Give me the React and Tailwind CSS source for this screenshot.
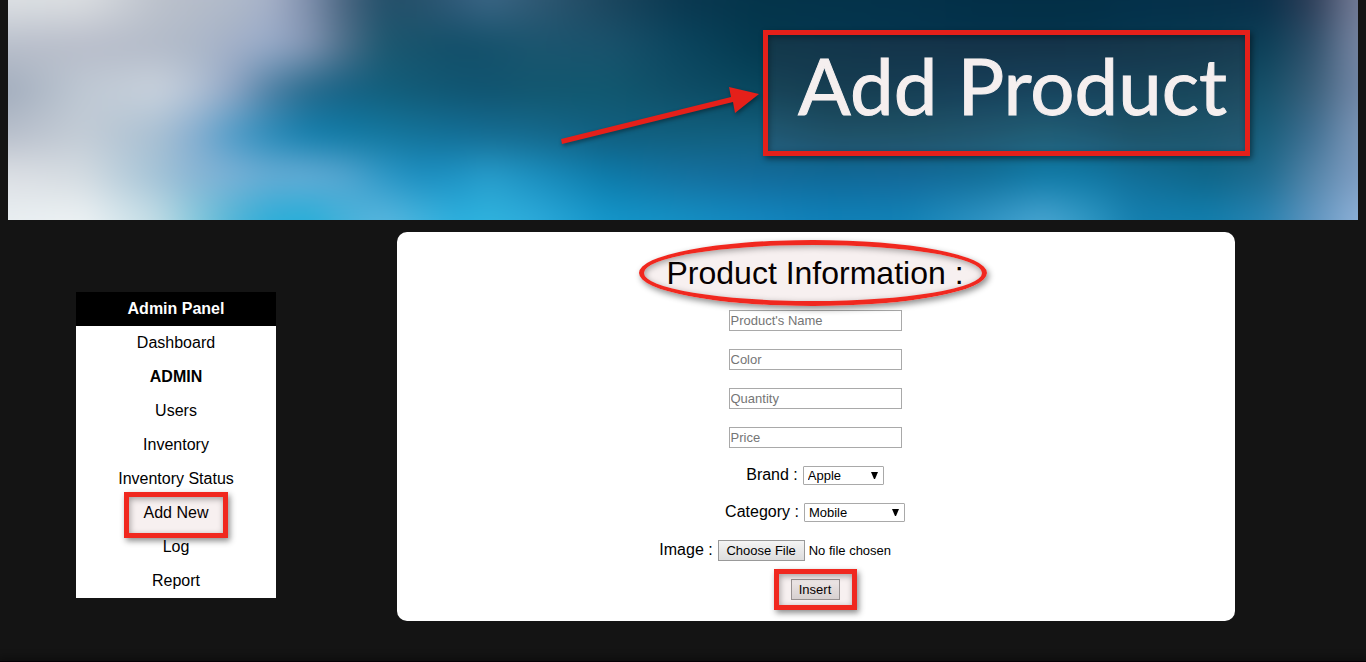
import React from "react";

const rowTops = [0, 45, 90, 135, 175, 220];
const columns = [0, 75, 150, 187, 225, 262, 300, 337, 375, 412, 450, 480, 525, 600, 675, 750, 825, 900, 975, 1035, 1080, 1125, 1200, 1260, 1305, 1350];
const rowColors = [
  "dde1e4 dbdee1 bcc2cc b6bdca b0bac9 a6b1c8 8090ad 4a6580 24506a 28526c 325c7b 3b6685 315a75 1c465e 0a3850 04344a 04334a 04324a 032f47 032f46 032f46 04304a 063049 0a304a 2f3e58 757d98",
  "b9bfcb b8bdca b3bbc9 adb8c8 a3b0c8 97aac8 8496b4 4d6f8a 1d5870 17536c 134f69 15516b 1b556f 1a526c 0b455e 04394f 043750 05354f 05344d 05344d 05354e 06374f 073a52 0d4058 30506b 7886a3",
  "a2adbd bec8d3 c9d2dd b4c2d5 8ea5c4 4f80a4 276a8c 176284 125f7c 125a76 115672 115470 12576f 11586f 0f4d66 08475e 073f56 07405a 084260 094664 094664 094660 0b4a62 165069 3a5f7a 7388a8",
  "b8bfcb c3ccd6 a8bfd2 86aed0 4f9cc8 2b8cba 147fad 117ba6 1478a0 14739a 136f97 156d93 156a8e 115f80 11607e 13607f 12566f 12586f 145d78 14657f 125f7c 105870 0f5c77 1a5f7c 417093 7d97b8",
  "dcdfe4 d3dbe1 a2c2d6 89b5d4 7ab0d5 68acd4 66acd5 55a5d0 2e98c7 1c8ec0 1f93c4 289dcc 1c90c0 0d7aa9 1571a0 136b9b 106998 14699a 116f9a 0f7aa8 0f78a5 126f99 0f6689 206c90 5484a8 7f9dc2",
  "e9eff2 edf2f4 c0dce5 87c9dc 50b5d6 2cadd8 25aed8 45b2da 5ab6de 42b4de 2bafde 30b4de 2dabdb 1496ca 1490c4 1387c0 0f80b8 1283b7 2f94c4 4aa6d2 3098c4 1580b0 117ead 2a84b2 6095c0 8fb2d8",
].map((row) => row.split(" "));

function BlurredSky() {
  return (
    <svg aria-hidden="true" viewBox="0 0 1350 220" preserveAspectRatio="none" className="absolute inset-0 h-full w-full">
      <defs>
        <filter id="soften" filterUnits="userSpaceOnUse" x="-60" y="-60" width="1470" height="340" colorInterpolationFilters="sRGB">
          <feGaussianBlur stdDeviation="13 11" />
        </filter>
        {rowColors.map((row, i) => (
          <linearGradient key={i} id={`sky-${i}`} gradientUnits="userSpaceOnUse" x1="0" x2="1350" y1="0" y2="0">
            {row.map((color, c) => (
              <stop key={c} offset={columns[c] / 1350} stopColor={`#${color}`} />
            ))}
          </linearGradient>
        ))}
        {rowTops.slice(1).map((y, i) => (
          <React.Fragment key={y}>
            <linearGradient id={`fade-${i + 1}`} gradientUnits="userSpaceOnUse" x1="0" x2="0" y1={rowTops[i]} y2={y}>
              <stop offset="0" stopColor="#fff" stopOpacity="0" />
              <stop offset="1" stopColor="#fff" />
            </linearGradient>
            <mask id={`mask-${i + 1}`} maskUnits="userSpaceOnUse" x="-60" y="-60" width="1470" height="340">
              <rect x="-60" y="-60" width="1470" height="340" fill={`url(#fade-${i + 1})`} />
            </mask>
          </React.Fragment>
        ))}
      </defs>
      <g filter="url(#soften)">
        {rowColors.map((row, i) => (
          <rect key={i} x="-60" y="-60" width="1470" height="340" fill={`url(#sky-${i})`} mask={i ? `url(#mask-${i})` : undefined} />
        ))}
      </g>
    </svg>
  );
}

function Highlight({ className }) {
  return (
    <span
      aria-hidden="true"
      className={`pointer-events-none absolute border-5 border-[#f0281f] bg-[#780000]/6 shadow-[2px_3px_6px_rgba(0,0,0,0.45),inset_1px_2px_6px_rgba(0,0,0,0.35)] ${className}`}
    />
  );
}

const links = ["Dashboard", "ADMIN", "Users", "Inventory", "Inventory Status", "Add New", "Log", "Report"];

function Sidebar() {
  return (
    <nav className="mt-[60px] w-[200px] shrink-0 bg-white text-center text-base leading-[34px]">
      <h2 className="bg-black font-bold text-white">Admin Panel</h2>
      <ul>
        {links.map((name) => (
          <li key={name}>
            <a href="#" className={name === "ADMIN" ? "font-bold" : "relative inline-block"}>
              {name}
              {name === "Add New" && <Highlight className="-inset-x-5 -top-1 -bottom-2" />}
            </a>
          </li>
        ))}
      </ul>
    </nav>
  );
}

function TextField({ label }) {
  return (
    <input
      type="text"
      aria-label={label}
      placeholder={label}
      className="h-[21px] w-[173px] border border-[#a9a9a9] bg-white px-px text-[13px] placeholder:text-[#757575]"
    />
  );
}

function SelectField({ id, label, options, width }) {
  return (
    <div className="flex h-[19px] items-center gap-[5px]">
      <label htmlFor={id} className="pb-0.5 text-base leading-[19px]">{label} :</label>
      <span className="relative flex">
        <select id={id} className={`h-[19px] appearance-none rounded-[1px] border border-[#a9a9a9] bg-white pl-1 text-[13px] leading-[17px] ${width}`}>
          {options.map((o) => (
            <option key={o}>{o}</option>
          ))}
        </select>
        <svg aria-hidden="true" viewBox="0 0 7 7" className="pointer-events-none absolute top-[6px] right-[6px] size-[7px]">
          <path d="M0 0H7L4 7H3Z" />
        </svg>
      </span>
    </div>
  );
}

const buttonFace = "border border-[#999] bg-linear-to-b from-[#f4f4f4] to-[#dddddd]";

export default function App() {
  return (
    <div className="flex min-h-screen flex-col bg-[#141414] font-['Liberation_Sans',Arial,sans-serif] text-black">
      <header className="relative mx-2 flex h-[220px] items-start justify-end overflow-hidden pt-[30px] pr-[108px]">
        <BlurredSky />
        <div className="relative flex h-[126px] w-[487px] items-center justify-center pl-3">
          <Highlight className="inset-0 border-[#e5201a]! bg-[#a03228]/10!" />
          <svg aria-hidden="true" viewBox="0 0 206 66" className="absolute top-[50px] right-full h-[66px] w-[206px] overflow-visible drop-shadow-[1px_2px_2px_rgba(0,0,0,0.4)]">
            <path d="M4 59L174 17L172 7L202 14L178 33L176 22L5 64Z" fill="#e5201a" />
          </svg>
          <h1 className="relative pb-4 font-[Lato,sans-serif] text-[78px] leading-[100px] whitespace-nowrap text-[#f5efef] [-webkit-text-stroke:1px_#f5efef]">Add Product</h1>
        </div>
      </header>

      <main className="flex flex-1 items-start gap-[121px] pt-3 pr-[131px] pl-[76px]">
        <Sidebar />
        <form onSubmit={(e) => e.preventDefault()} className="flex flex-1 flex-col items-center gap-[18px] rounded-[10px] bg-white pt-[22px] pr-0.5 pb-[21px]">
          <h2 className="relative text-[32px] leading-[38px]">
            Product Information :
            <Highlight className="-right-[23px] -left-[27px] -inset-y-[14px] rounded-[50%]" />
          </h2>
          <TextField label="Product's Name" />
          <TextField label="Color" />
          <TextField label="Quantity" />
          <TextField label="Price" />
          <SelectField id="brand" label="Brand" options={["Apple", "Samsung"]} width="w-[81px]" />
          <SelectField id="category" label="Category" options={["Mobile", "Laptop"]} width="w-[101px]" />
          <div className="flex h-[21px] items-center gap-[5px]">
            <label htmlFor="image" className="pb-0.5 text-base leading-[19px]">Image :</label>
            <input
              id="image"
              type="file"
              className="h-[21px] w-[253px] text-[13px] leading-[21px] file:mr-1 file:h-[21px] file:w-[87px] file:border file:border-solid file:border-[#999] file:bg-linear-to-b file:from-[#f4f4f4] file:to-[#dddddd] file:p-0 file:text-[13px] file:leading-[19px]"
            />
          </div>
          <div className="relative flex">
            <button type="submit" className={`h-[21px] w-[49px] text-[13px] leading-[19px] ${buttonFace}`}>Insert</button>
            <Highlight className="-inset-x-[17px] -inset-y-[10px]" />
          </div>
        </form>
      </main>
      <footer className="h-px bg-[#050005] shadow-[0_0_8px_2px_rgba(0,0,0,0.6)]" />
    </div>
  );
}
